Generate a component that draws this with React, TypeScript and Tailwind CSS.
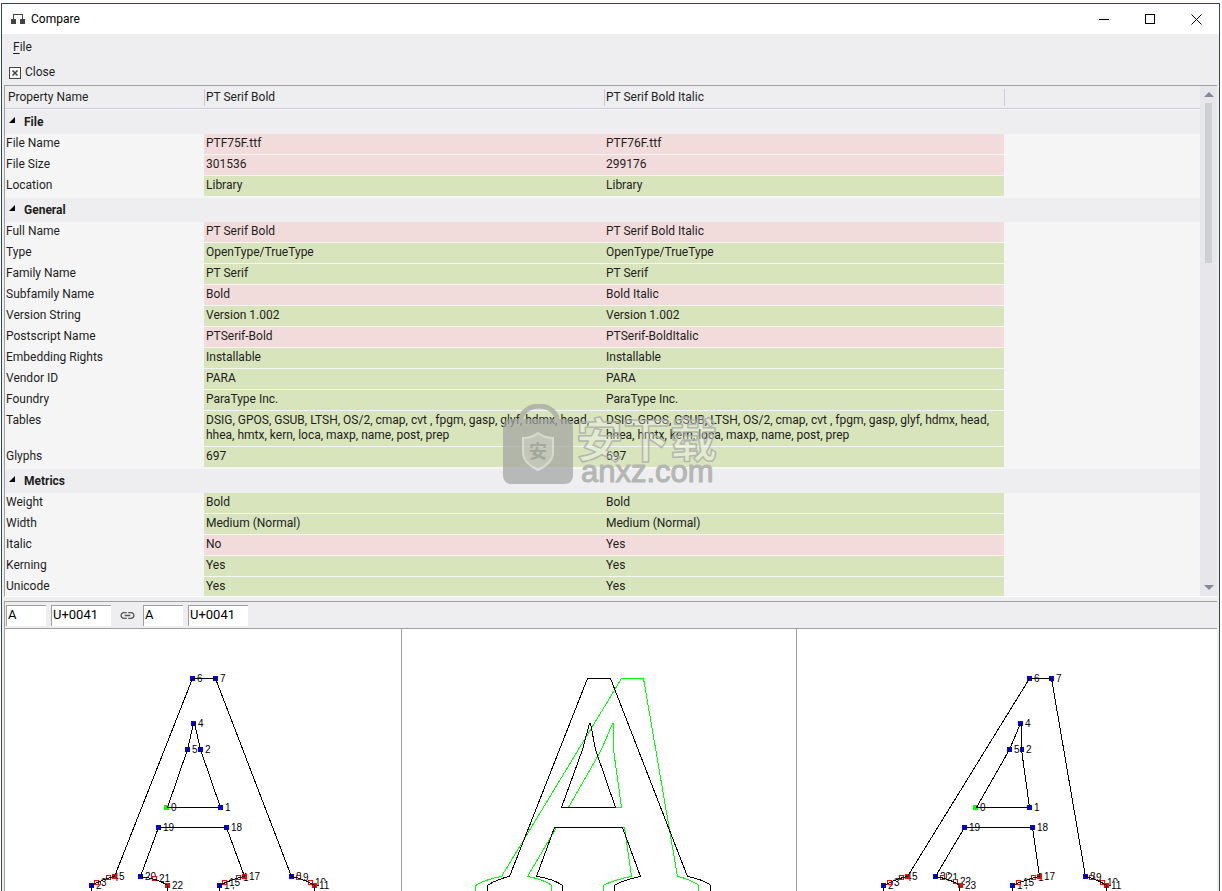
import React, { useState } from 'react';
import { MdLink } from 'react-icons/md';

type Row = { name: string; left: string; right: string };
type Group = { title: string; rows: Row[] };
type Point = { x: number; y: number; kind: 'start' | 'corner' | 'curve' | 'off'; label: string };

const TABLES = 'DSIG, GPOS, GSUB, LTSH, OS/2, cmap, cvt , fpgm, gasp, glyf, hdmx, head, hhea, hmtx, kern, loca, maxp, name, post, prep';

const groups: Group[] = [
  {
    title: 'File',
    rows: [
      { name: 'File Name', left: 'PTF75F.ttf', right: 'PTF76F.ttf' },
      { name: 'File Size', left: '301536', right: '299176' },
      { name: 'Location', left: 'Library', right: 'Library' },
    ],
  },
  {
    title: 'General',
    rows: [
      { name: 'Full Name', left: 'PT Serif Bold', right: 'PT Serif Bold Italic' },
      { name: 'Type', left: 'OpenType/TrueType', right: 'OpenType/TrueType' },
      { name: 'Family Name', left: 'PT Serif', right: 'PT Serif' },
      { name: 'Subfamily Name', left: 'Bold', right: 'Bold Italic' },
      { name: 'Version String', left: 'Version 1.002', right: 'Version 1.002' },
      { name: 'Postscript Name', left: 'PTSerif-Bold', right: 'PTSerif-BoldItalic' },
      { name: 'Embedding Rights', left: 'Installable', right: 'Installable' },
      { name: 'Vendor ID', left: 'PARA', right: 'PARA' },
      { name: 'Foundry', left: 'ParaType Inc.', right: 'ParaType Inc.' },
      { name: 'Tables', left: TABLES, right: TABLES },
      { name: 'Glyphs', left: '697', right: '697' },
    ],
  },
  {
    title: 'Metrics',
    rows: [
      { name: 'Weight', left: 'Bold', right: 'Bold' },
      { name: 'Width', left: 'Medium (Normal)', right: 'Medium (Normal)' },
      { name: 'Italic', left: 'No', right: 'Yes' },
      { name: 'Kerning', left: 'Yes', right: 'Yes' },
      { name: 'Unicode', left: 'Yes', right: 'Yes' },
    ],
  },
];

const boldPoints: Point[] = [
  { x: 161.5, y: 178.5, kind: 'start', label: '0' },
  { x: 215.5, y: 178.5, kind: 'corner', label: '1' },
  { x: 195.5, y: 120.5, kind: 'corner', label: '2' },
  { x: 188.5, y: 94.5, kind: 'corner', label: '4' },
  { x: 182.5, y: 120.5, kind: 'corner', label: '5' },
  { x: 187.5, y: 49.5, kind: 'corner', label: '6' },
  { x: 210.5, y: 49.5, kind: 'corner', label: '7' },
  { x: 286.5, y: 247.5, kind: 'corner', label: '8' },
  { x: 293.5, y: 248.5, kind: 'off', label: '9' },
  { x: 305.5, y: 253.5, kind: 'off', label: '10' },
  { x: 309.5, y: 256.5, kind: 'curve', label: '11' },
  { x: 214.5, y: 256.5, kind: 'corner', label: '14' },
  { x: 219.5, y: 253.5, kind: 'off', label: '15' },
  { x: 233.5, y: 248.5, kind: 'off', label: '16' },
  { x: 239.5, y: 247.5, kind: 'curve', label: '17' },
  { x: 221.5, y: 198.5, kind: 'corner', label: '18' },
  { x: 153.5, y: 198.5, kind: 'corner', label: '19' },
  { x: 135.5, y: 247.5, kind: 'corner', label: '20' },
  { x: 149.5, y: 249.5, kind: 'off', label: '21' },
  { x: 162.5, y: 256.5, kind: 'curve', label: '22' },
  { x: 86.5, y: 256.5, kind: 'corner', label: '2' },
  { x: 91.5, y: 253.5, kind: 'off', label: '3' },
  { x: 103.5, y: 248.5, kind: 'off', label: '4' },
  { x: 109.5, y: 247.5, kind: 'curve', label: '5' },
];

const italicPoints: Point[] = [
  { x: 178.5, y: 178.5, kind: 'start', label: '0' },
  { x: 232.5, y: 178.5, kind: 'corner', label: '1' },
  { x: 224.5, y: 120.5, kind: 'corner', label: '2' },
  { x: 223.5, y: 94.5, kind: 'corner', label: '4' },
  { x: 212.5, y: 120.5, kind: 'corner', label: '5' },
  { x: 232.5, y: 49.5, kind: 'corner', label: '6' },
  { x: 254.5, y: 49.5, kind: 'corner', label: '7' },
  { x: 288.5, y: 247.5, kind: 'corner', label: '8' },
  { x: 294.5, y: 248.5, kind: 'off', label: '9' },
  { x: 305.5, y: 253.5, kind: 'off', label: '10' },
  { x: 309.5, y: 256.5, kind: 'curve', label: '11' },
  { x: 215.5, y: 256.5, kind: 'corner', label: '14' },
  { x: 221.5, y: 253.5, kind: 'off', label: '15' },
  { x: 236.5, y: 248.5, kind: 'off', label: '16' },
  { x: 242.5, y: 247.5, kind: 'curve', label: '17' },
  { x: 235.5, y: 198.5, kind: 'corner', label: '18' },
  { x: 167.5, y: 198.5, kind: 'corner', label: '19' },
  { x: 138.5, y: 247.5, kind: 'corner', label: '20' },
  { x: 145.5, y: 248.5, kind: 'off', label: '21' },
  { x: 158.5, y: 252.5, kind: 'off', label: '22' },
  { x: 163.5, y: 256.5, kind: 'curve', label: '23' },
  { x: 86.5, y: 256.5, kind: 'corner', label: '2' },
  { x: 92.5, y: 253.5, kind: 'off', label: '3' },
  { x: 104.5, y: 248.5, kind: 'off', label: '4' },
  { x: 110.5, y: 247.5, kind: 'curve', label: '5' },
];

const BOLD_PATH =
  'M162.5 178.5H215.5L195.5 120.5L189.5 94.5H188.5L182.5 120.5Z' +
  'M86.5 400V256.5C91.5 253.5 103.5 248.5 109.5 247.5L187.5 49.5H210.5L286.5 247.5C293.5 248.5 305.5 253.5 309.5 256.5V400' +
  'M162.5 400V256.5C157 252 149.5 249.5 135.5 247.5L153.5 198.5H221.5L239.5 247.5C233.5 248.5 219.5 253.5 214.5 256.5V400';

const ITALIC_PATH =
  'M179.5 178.5H232.5L224.5 120.5V94.5H223.5L212.5 120.5Z' +
  'M86.5 400V256.5C92.5 253.5 104.5 248.5 110.5 247.5L232.5 49.5H254.5L288.5 247.5C294.5 248.5 305.5 253.5 309.5 256.5V400' +
  'M162.5 400V256.5C158.5 252.5 145.5 248.5 138.5 247.5L167.5 198.5H235.5L242.5 247.5C236.5 248.5 221.5 253.5 215.5 256.5V400';

const OVERLAY_BOLD =
  'M159.5 178.5H213.5L193.5 120.5L188.5 94.5H187.5L180.5 120.5Z' +
  'M85.5 400V256.5C90.5 252.5 101.5 248.5 107.5 247.5L185.5 49.5H208.5L285.5 247.5C292.5 248.5 304.5 252.5 308.5 256.5V400' +
  'M160.5 400V256.5C155.5 252.5 144.5 248.5 134.5 247.5L152.5 198.5H220.5L238.5 247.5C232.5 248.5 217.5 252.5 212.5 256.5V400';

const OVERLAY_ITALIC =
  'M166.5 178.5H219.5L211.5 120.5V94.5H210.5L199.5 120.5Z' +
  'M73.5 400V256.5C79.5 252.5 91.5 248.5 99.5 247.5L219.5 49.5H241.5L275.5 247.5C281.5 248.5 292.5 252.5 296.5 256.5V400' +
  'M149.5 400V256.5C145.5 252.5 132.5 248.5 125.5 247.5L154.5 198.5H222.5L229.5 247.5C223.5 248.5 207.5 252.5 201.5 256.5V400';

const markerColor = { start: '#00ff00', corner: '#0000ff', curve: '#ff0000', off: '#ffffff' };

function GlyphPoints({ points, path }: { points: Point[]; path: string }) {
  return (
    <svg className="block h-full w-full" shapeRendering="crispEdges">
      {points.map((p, i) => (
        <g key={i}>
          <rect x={p.x + 4.5} y={p.y - 4.5} width={p.label.length * 6} height={9} fill="#fff" />
          <text x={p.x + 4.5} y={p.y + 3.5} className="font-['Liberation_Sans',sans-serif] text-[10px]" fill="#000">
            {p.label}
          </text>
          {p.kind === 'off' ? (
            <rect x={p.x - 2} y={p.y - 2} width={4} height={4} fill="#fff" stroke="#ff0000" />
          ) : (
            <rect x={p.x - 2.5} y={p.y - 2.5} width={5} height={5} fill={markerColor[p.kind]} />
          )}
        </g>
      ))}
      <path d={path} fill="none" stroke="#000" />
    </svg>
  );
}

function Watermark() {
  return (
    <svg className="pointer-events-none absolute top-[404px] left-[503px]" width="216" height="90" aria-hidden="true">
      <g opacity="0.72">
        <path d="M18 16a18 14 0 0 1 36 0" fill="none" stroke="#a3a5a3" strokeWidth="5" />
        <rect x="0" y="15" width="70" height="65" rx="8" fill="#a3a5a3" />
        <path d="M35 29c5 4 10 5 15 5v15c0 8-7 13-15 17c-8-4-15-9-15-17v-15c5 0 10-1 15-5z" fill="#b9bbb8" stroke="#d5d7d3" strokeWidth="2" />
        <text x="26" y="54" className="font-['Noto_Sans_CJK_SC',sans-serif] text-[18px] font-bold" fill="#8f918f">
          安
        </text>
      </g>
      <text
        x="73"
        y="53"
        className="font-['Noto_Sans_CJK_SC',sans-serif] text-[47px] font-bold"
        fill="#ffffff"
        fillOpacity="0.3"
        stroke="#a8aaa8"
        strokeOpacity="0.8"
        strokeWidth="1.5"
        strokeLinejoin="round"
      >
        安下载
      </text>
      <text
        x="78"
        y="78"
        className="font-['Liberation_Sans',sans-serif] text-[31px]"
        fill="#b4b6b3"
        stroke="#b4b6b3"
        strokeWidth="1"
      >
        anxz.com
      </text>
    </svg>
  );
}

function CodeInput({ label, value, onChange, wide }: { label: string; value: string; onChange: (v: string) => void; wide?: boolean }) {
  return (
    <input
      aria-label={label}
      value={value}
      onChange={(e) => onChange(e.target.value)}
      className={`h-[21px] border-t border-l border-[#a0a0a0] bg-white px-px pb-0.5 text-[13px] text-black outline-none ${wide ? 'w-[60px]' : 'w-10'}`}
    />
  );
}

export default function App() {
  const [codes, setCodes] = useState(['A', 'U+0041', 'A', 'U+0041']);
  const setCode = (i: number) => (v: string) => setCodes((c) => c.map((old, n) => (n === i ? v : old)));

  return (
    <div className="relative h-screen overflow-hidden bg-white pt-[3px] pr-0.5 pl-px font-['Roboto','Noto_Sans_CJK_SC',sans-serif] text-[12px] leading-[15px] text-[#1e1e1e]">
      <div className="flex h-full flex-col border-x border-t border-[#2f4a55] bg-[#eeeef0]">
        <header className="flex h-[30px] shrink-0 items-center bg-white pl-[9px] text-black">
          <svg width="14" height="11" className="mr-1.5" shapeRendering="crispEdges">
            <path d="M2.5 6V.5H11.5V6" fill="none" stroke="#444" />
            <rect x="0" y="5" width="5" height="5" fill="#444" />
            <rect x="9" y="5" width="5" height="5" fill="#444" />
          </svg>
          <h1 className="flex-1">Compare</h1>
          <button aria-label="Minimize" className="flex h-full w-[46px] items-center justify-center">
            <svg width="11" height="11" shapeRendering="crispEdges">
              <path d="M0 5.5H10" stroke="#000" />
            </svg>
          </button>
          <button aria-label="Maximize" className="flex h-full w-[46px] items-center justify-center">
            <svg width="11" height="11" shapeRendering="crispEdges">
              <rect x="0.5" y="0.5" width="9" height="9" fill="none" stroke="#000" />
            </svg>
          </button>
          <button aria-label="Close window" className="flex h-full w-[46px] items-center justify-center">
            <svg width="11" height="11">
              <path d="M0.5 0.5L10.5 10.5M10.5 0.5L0.5 10.5" stroke="#000" />
            </svg>
          </button>
        </header>

        <nav className="flex h-[26px] shrink-0 items-center px-[11px]">
          <button>
            <span className="underline underline-offset-2">F</span>ile
          </button>
        </nav>
        <div className="flex h-[25px] shrink-0 items-center px-[7px]">
          <button className="flex items-center gap-1">
            <svg width="12" height="12">
              <rect x="0.5" y="0.5" width="11" height="11" fill="#f7f7f7" stroke="#444" />
              <path d="M3.5 3.5L8.5 8.5M8.5 3.5L3.5 8.5" stroke="#444" strokeWidth="1.5" />
            </svg>
            Close
          </button>
        </div>

        <main className="flex min-h-0 flex-1 flex-col px-0.5">
          <section className="flex min-h-0 flex-[510] basis-0 border-t border-b border-l border-t-[#a0a0a0] border-b-white border-l-[#a0a0a0] bg-[#f5f5f5]">
            <div className="min-w-0 flex-1 overflow-hidden">
              <table className="w-full table-fixed border-separate border-spacing-0 text-left">
                <colgroup>
                  <col className="w-[199px]" />
                  <col className="w-[400px]" />
                  <col className="w-[400px]" />
                  <col />
                </colgroup>
                <thead className="bg-[#eeeef0] leading-[17px]">
                  <tr className="h-[23px]">
                    <th className="border-b border-[#cccce0] p-0 pl-[3px] font-normal">Property Name</th>
                    <th className="border-b border-[#cccce0] p-0 font-normal">
                      <div className="h-[17px] border-l border-[#cccce0] pl-px">PT Serif Bold</div>
                    </th>
                    <th className="border-b border-[#cccce0] p-0 font-normal">
                      <div className="h-[17px] border-l border-[#cccce0] pl-px">PT Serif Bold Italic</div>
                    </th>
                    <td className="border-b border-[#cccce0] p-0">
                      <div className="h-[17px] border-l border-[#cccce0]" />
                    </td>
                  </tr>
                </thead>
                {groups.map((group) => (
                  <tbody key={group.title}>
                    <tr className="h-[25px] bg-[#eeeef0]">
                      <th colSpan={4} scope="rowgroup" className="border-t border-[#f5f5f5] p-0 pl-1">
                        <div className="flex items-center gap-[9px]">
                          <svg width="6" height="6" className="-mt-1">
                            <path d="M6 0V6H0Z" fill="#000" />
                          </svg>
                          {group.title}
                        </div>
                      </th>
                    </tr>
                    {group.rows.map((row) => {
                      const color = row.left === row.right ? 'bg-[#d8e4bc]' : 'bg-[#f2dcdb]';
                      return (
                        <tr key={row.name} className="align-top">
                          <th scope="row" className="border-b border-[#f5f5f5] p-0 pt-0.5 pb-[3px] pl-px font-normal">
                            {row.name}
                          </th>
                          <td className={`border-b border-[#f5f5f5] p-0 pt-0.5 pb-[3px] pl-0.5 ${color}`}>{row.left}</td>
                          <td className={`border-b border-[#f5f5f5] p-0 pt-0.5 pb-[3px] pl-0.5 ${color}`}>{row.right}</td>
                          <td />
                        </tr>
                      );
                    })}
                  </tbody>
                ))}
              </table>
            </div>
            <div className="flex w-[17px] flex-col items-center bg-[#e6e6eb]">
              <button aria-label="Scroll up" className="flex h-[17px] w-full items-center justify-center">
                <svg width="10" height="5">
                  <path d="M5 0L10 5H0Z" fill="#868999" />
                </svg>
              </button>
              <div className="h-[160px] w-[7px] bg-[#cecfd4]" />
              <button aria-label="Scroll down" className="mt-auto flex h-[17px] w-full items-center justify-center">
                <svg width="10" height="5">
                  <path d="M0 0H10L5 5Z" fill="#868999" />
                </svg>
              </button>
            </div>
          </section>

          <form className="mt-1 flex h-7 shrink-0 items-center gap-[5px] border-y border-l border-[#a0a0a0] pl-px">
            <CodeInput label="Left character" value={codes[0]} onChange={setCode(0)} />
            <CodeInput label="Left code point" value={codes[1]} onChange={setCode(1)} wide />
            <button type="button" aria-label="Link characters" className="flex w-[22px] justify-center">
              <MdLink size={17} color="#555" />
            </button>
            <CodeInput label="Right character" value={codes[2]} onChange={setCode(2)} />
            <CodeInput label="Right code point" value={codes[3]} onChange={setCode(3)} wide />
          </form>

          <section className="grid min-h-0 flex-[262] basis-0 grid-cols-[397fr_395fr_420fr] border-l border-[#a0a0a0] bg-white">
            <div className="overflow-hidden border-r border-[#a0a0a0]">
              <GlyphPoints points={boldPoints} path={BOLD_PATH} />
            </div>
            <div className="overflow-hidden border-r border-[#a0a0a0]">
              <svg className="block h-full w-full" shapeRendering="crispEdges">
                <path d={OVERLAY_ITALIC} fill="none" stroke="#00ff00" />
                <path d={OVERLAY_BOLD} fill="none" stroke="#000" />
              </svg>
            </div>
            <div className="overflow-hidden">
              <GlyphPoints points={italicPoints} path={ITALIC_PATH} />
            </div>
          </section>
        </main>
      </div>
      <Watermark />
    </div>
  );
}
